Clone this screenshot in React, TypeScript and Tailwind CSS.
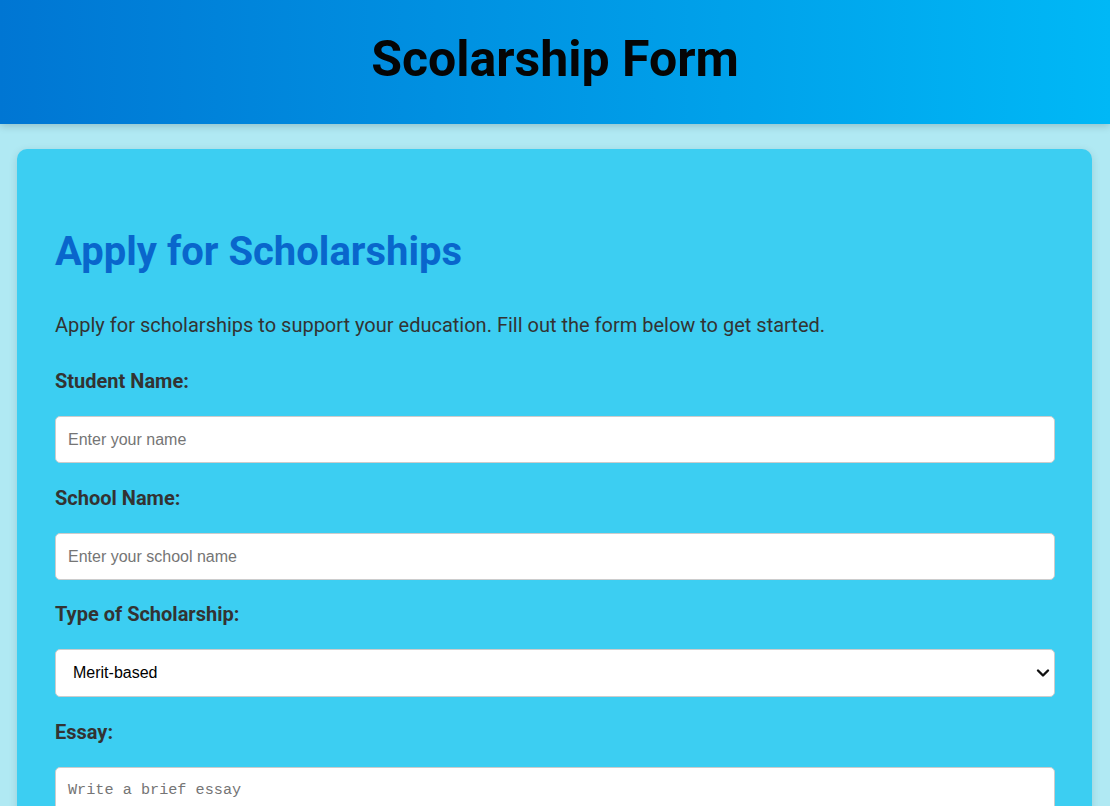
import React from 'react';

const labelClass = 'block text-[20px] leading-[23px] font-bold text-[#333333] mb-[23px]';
const fieldClass =
  'block w-full h-[47px] bg-white border border-[#cccccc] rounded-[5px] px-[12px] text-[16px] text-black placeholder:text-[#757575] outline-none';

const App = () => {
  return (
    <div className="min-h-screen bg-[#b0e9f3] flex flex-col" style={{ fontFamily: 'Roboto, "Noto Sans", sans-serif' }}>
      <header className="h-[124px] bg-gradient-to-r from-[#0076d3] to-[#00b8f6] flex items-center justify-center shadow-[0_2px_8px_rgba(0,0,0,0.18)] relative z-10">
        <h1 className="text-[50px] leading-[58px] font-bold text-[#050505] -mt-[6px]">Scolarship Form</h1>
      </header>

      <main className="pt-[25px] pl-[17px] pr-[18px]">
        <div className="bg-[#3ccef2] rounded-[10px] shadow-[0_2px_8px_rgba(0,0,0,0.12)] pl-[38px] pr-[37px] pt-[79px] pb-[40px]">
          <h2 className="text-[40px] leading-[48px] font-bold text-[#0966cc]">Apply for Scholarships</h2>
          <p className="mt-[34px] text-[20px] leading-[30px] text-[#333333]">
            Apply for scholarships to support your education. Fill out the form below to get started.
          </p>

          <form className="mt-[30px]" onSubmit={(e) => e.preventDefault()}>
            <label className={labelClass} htmlFor="student">Student Name:</label>
            <input id="student" type="text" placeholder="Enter your name" className={`${fieldClass} mb-[24px]`} style={{ fontFamily: '"Liberation Sans", Arial, sans-serif' }} />

            <label className={labelClass} htmlFor="school">School Name:</label>
            <input id="school" type="text" placeholder="Enter your school name" className={`${fieldClass} mb-[23px]`} style={{ fontFamily: '"Liberation Sans", Arial, sans-serif' }} />

            <label className={labelClass} htmlFor="type">Type of Scholarship:</label>
            <div className="relative mb-[24px]">
              <select
                id="type"
                defaultValue="merit"
                className={`${fieldClass} h-[48px] appearance-none pl-[17px]`}
                style={{ fontFamily: '"Liberation Sans", Arial, sans-serif' }}
              >
                <option value="merit">Merit-based</option>
                <option value="need">Need-based</option>
                <option value="athletic">Athletic</option>
              </select>
              <svg className="absolute right-[5px] top-1/2 -translate-y-1/2 w-[14px] h-[10px] pointer-events-none" viewBox="0 0 14 10">
                <path d="M2 2.5 L7 7.5 L12 2.5" fill="none" stroke="#111" strokeWidth="2.4" strokeLinecap="round" strokeLinejoin="round" />
              </svg>
            </div>

            <label className={labelClass} htmlFor="essay">Essay:</label>
            <textarea
              id="essay"
              placeholder="Write a brief essay"
              rows={6}
              className="block w-full bg-white border border-[#cccccc] rounded-[5px] px-[12px] pt-[12px] text-[15.2px] leading-[20px] text-black placeholder:text-[#757575] outline-none resize-y"
              style={{ fontFamily: '"Liberation Mono", "DejaVu Sans Mono", monospace' }}
            />
          </form>
        </div>
      </main>
    </div>
  );
};

export default App;
